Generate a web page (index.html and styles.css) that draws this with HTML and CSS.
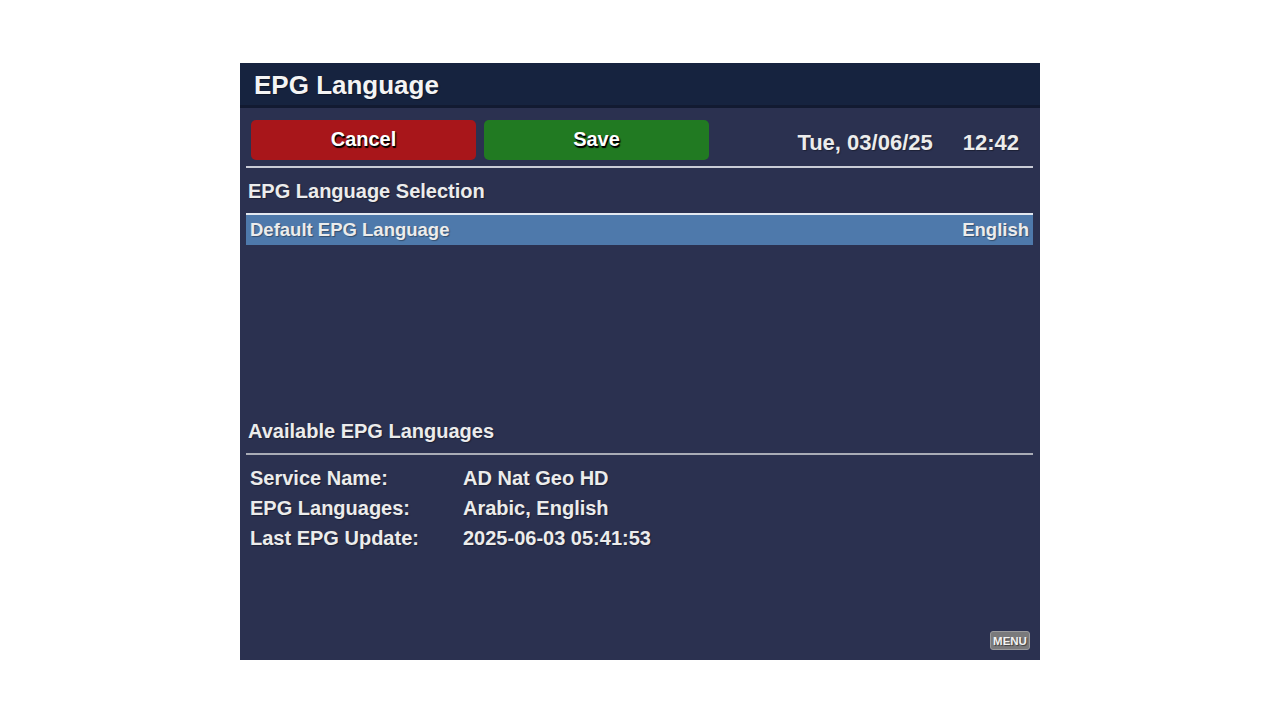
FILE: index.html
```html
<!DOCTYPE html>
<html lang="en">
<head>
    <meta charset="UTF-8">
    <meta name="viewport" content="width=device-width, initial-scale=1.0">
    <title>EPG Language</title>
    <link rel="stylesheet" href="styles.css">
</head>
<body>
    <div class="screen">
        <div class="titlebar">EPG Language</div>

        <div class="toolbar">
            <button class="btn btn-cancel">Cancel</button>
            <button class="btn btn-save">Save</button>
            <div class="clock">
                <span>Tue, 03/06/25</span>
                <span>12:42</span>
            </div>
        </div>
        <div class="rule"></div>

        <div class="section-title">EPG Language Selection</div>
        <div class="list">
            <div class="list-row selected">
                <span>Default EPG Language</span>
                <span>English</span>
            </div>
        </div>

        <div class="section-title">Available EPG Languages</div>
        <div class="rule rule-dim"></div>
        <div class="info">
            <div class="info-row"><span class="info-label">Service Name:</span><span>AD Nat Geo HD</span></div>
            <div class="info-row"><span class="info-label">EPG Languages:</span><span>Arabic, English</span></div>
            <div class="info-row"><span class="info-label">Last EPG Update:</span><span>2025-06-03 05:41:53</span></div>
        </div>

        <div class="menu-key">MENU</div>
    </div>
</body>
</html>
```

FILE: styles.css
```css
body {
    margin: 0;
    padding: 0;
    background: #ffffff;
    font-family: 'Liberation Sans', Arial, sans-serif;
}

.screen {
    width: 800px;
    height: 597px;
    margin: 63px auto 0;
    background: #2b3150;
    color: #ececec;
    font-weight: bold;
    display: flex;
    flex-direction: column;
    text-shadow: 1px 1px 1px rgba(0, 0, 0, 0.35);
}

.titlebar {
    height: 42px;
    line-height: 45px;
    padding-left: 14px;
    font-size: 26px;
    background: #16233f;
    border-bottom: 3px solid #121a31;
    color: #f4f4f4;
}

.toolbar {
    display: flex;
    align-items: center;
    height: 39px;
    margin: 12px 21px 0 11px;
    gap: 8px;
}

.btn {
    width: 225px;
    height: 40px;
    border: none;
    border-radius: 5px;
    font-family: inherit;
    font-size: 20px;
    font-weight: bold;
    color: #ffffff;
    text-shadow: 1px 1px 1px #000, 1px 2px 1px #000;
    padding: 0;
}

.btn-cancel {
    background: #a8161a;
}

.btn-save {
    background: #217a22;
}

.clock {
    margin-left: auto;
    display: flex;
    gap: 30px;
    font-size: 22px;
    padding-top: 7px;
}

.rule {
    height: 2px;
    margin: 7px 7px 0 6px;
    background: #c9ccd6;
}

.rule-dim {
    margin-top: 0;
    background: #a9acb6;
}

.section-title {
    font-size: 20px;
    height: 45px;
    line-height: 46px;
    padding-left: 8px;
}

.list {
    height: 195px;
    margin: 0 7px 0 6px;
}

.list-row {
    display: flex;
    justify-content: space-between;
    height: 30px;
    line-height: 29px;
    padding: 0 4px;
    font-size: 18.5px;
}

.list-row.selected {
    background: #4e79ab;
    border-top: 2px solid #e3e8f0;
}

.info {
    padding: 9px 0 0 10px;
}

.info-row {
    display: flex;
    height: 30px;
    line-height: 29px;
    font-size: 20px;
}

.info-label {
    width: 213px;
}

.menu-key {
    margin: auto 10px 10px 0;
    align-self: flex-end;
    width: 40px;
    height: 19px;
    line-height: 19px;
    text-align: center;
    font-size: 11.5px;
    color: #f2f2f2;
    background: #7a7a7c;
    border: 1px solid #9a9a9c;
    border-radius: 3px;
    box-sizing: border-box;
    text-shadow: 1px 1px 1px rgba(0, 0, 0, 0.5);
}
```
